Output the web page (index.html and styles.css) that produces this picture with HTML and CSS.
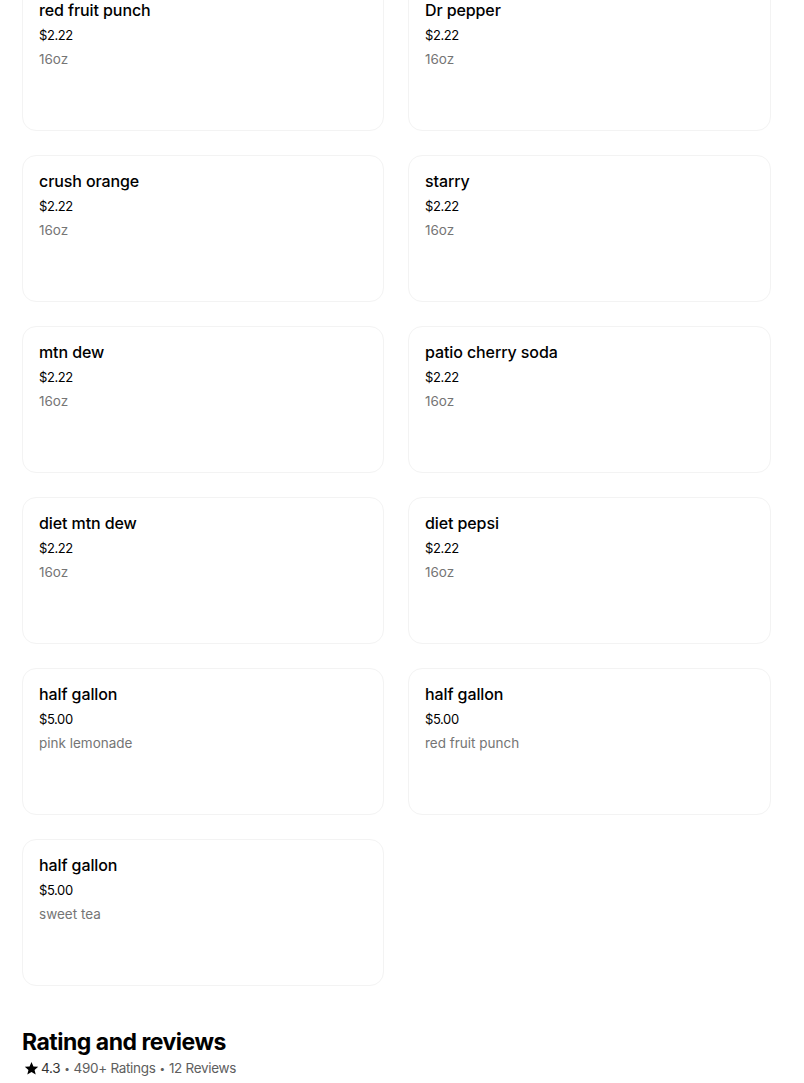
FILE: index.html
```html
<!DOCTYPE html>
<html lang="en">
<head>
<meta charset="utf-8">
<title>Menu</title>
<link rel="stylesheet" href="styles.css">
</head>
<body>
<main class="page">
  <section class="grid">
    <div class="card"><div class="title">red fruit punch</div><div class="price">$2.22</div><div class="desc">16oz</div></div>
    <div class="card"><div class="title">Dr pepper</div><div class="price">$2.22</div><div class="desc">16oz</div></div>
    <div class="card"><div class="title">crush orange</div><div class="price">$2.22</div><div class="desc">16oz</div></div>
    <div class="card"><div class="title">starry</div><div class="price">$2.22</div><div class="desc">16oz</div></div>
    <div class="card"><div class="title">mtn dew</div><div class="price">$2.22</div><div class="desc">16oz</div></div>
    <div class="card"><div class="title">patio cherry soda</div><div class="price">$2.22</div><div class="desc">16oz</div></div>
    <div class="card"><div class="title">diet mtn dew</div><div class="price">$2.22</div><div class="desc">16oz</div></div>
    <div class="card"><div class="title">diet pepsi</div><div class="price">$2.22</div><div class="desc">16oz</div></div>
    <div class="card"><div class="title">half gallon</div><div class="price">$5.00</div><div class="desc">pink lemonade</div></div>
    <div class="card"><div class="title">half gallon</div><div class="price">$5.00</div><div class="desc">red fruit punch</div></div>
    <div class="card"><div class="title">half gallon</div><div class="price">$5.00</div><div class="desc">sweet tea</div></div>
  </section>
  <section class="reviews">
    <h2 class="reviews-title">Rating and reviews</h2>
    <div class="rating-line">
      <svg class="star" viewBox="0 0 24 24" width="15" height="15" aria-hidden="true"><path d="M12 1.5l3.1 7.1 7.6.6-5.8 5 1.8 7.5L12 17.7l-6.7 4 1.8-7.5-5.8-5 7.6-.6z" fill="#000"/></svg>
      <span class="score">4.3</span>
      <span class="sep">•</span>
      <span>490+ Ratings</span>
      <span class="sep">•</span>
      <span>12 Reviews</span>
    </div>
  </section>
</main>
</body>
</html>
```

FILE: styles.css
```css
html, body {
  margin: 0;
  padding: 0;
  background: #fff;
}
body {
  font-family: Inter, "Noto Sans", "Liberation Sans", sans-serif;
  color: #000;
  overflow: hidden;
}
.page {
  margin: -16px 33px 0 22px;
}
.grid {
  display: grid;
  grid-template-columns: 362px 363px;
  column-gap: 24px;
  row-gap: 24px;
}
.card {
  box-sizing: border-box;
  height: 147px;
  border: 1px solid #f3f3f3;
  border-radius: 14px;
  padding: 15px 16px 0 16px;
}
.title {
  font-size: 16px;
  font-weight: 500;
  line-height: 20px;
  letter-spacing: -0.1px;
}
.price {
  margin-top: 3px;
  font-size: 13px;
  line-height: 24px;
  color: #000;
  letter-spacing: -0.4px;
}
.desc {
  font-size: 13.5px;
  line-height: 24px;
  color: #757575;
  letter-spacing: 0;
}
.reviews {
  margin-top: 40px;
}
.reviews-title {
  margin: 0;
  font-size: 23px;
  font-weight: 700;
  line-height: 32px;
  letter-spacing: -0.5px;
}
.rating-line {
  display: flex;
  align-items: center;
  gap: 4px;
  margin-top: 0;
  padding-left: 2px;
  font-size: 13.5px;
  line-height: 20px;
  color: #5e5e5e;
  letter-spacing: -0.3px;
}
.star {
  display: block;
  margin-right: -2px;
}
.score {
  color: #333;
}
.sep {
  font-size: 10px;
}
```
